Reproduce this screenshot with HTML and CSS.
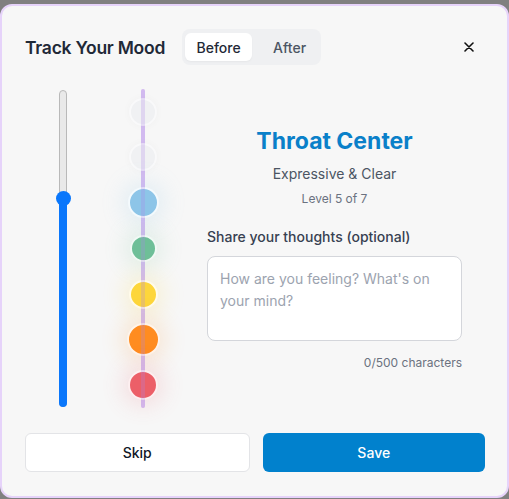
FILE: index.html
```html
<!DOCTYPE html>
<html>
<head>
<meta charset="utf-8">
<link rel="stylesheet" href="styles.css">
</head>
<body>
<div class="modal">
  <div class="header">
    <h1 class="title">Track Your Mood</h1>
    <div class="seg">
      <span class="seg-item active">Before</span>
      <span class="seg-item">After</span>
    </div>
    <button class="close" aria-label="Close">
      <svg width="10" height="10" viewBox="0 0 10 10"><path d="M1 1 L9 9 M9 1 L1 9" stroke="#111" stroke-width="1.6" stroke-linecap="round"/></svg>
    </button>
  </div>
  <div class="main">
    <div class="slider-col">
      <div class="track">
        <div class="fill" style="height:66%"></div>
        <div class="thumb" style="bottom:66%"></div>
      </div>
    </div>
    <div class="chakra-col">
      <div class="line"></div>
      <div class="slot"><span class="dot dot-off"></span></div>
      <div class="slot"><span class="dot dot-off"></span></div>
      <div class="slot"><span class="dot dot-blue"></span></div>
      <div class="slot"><span class="dot dot-green"></span></div>
      <div class="slot"><span class="dot dot-yellow"></span></div>
      <div class="slot"><span class="dot dot-orange"></span></div>
      <div class="slot"><span class="dot dot-red"></span></div>
      <div class="line line-top"></div>
    </div>
    <div class="info">
      <h2 class="center-name">Throat Center</h2>
      <p class="subtitle">Expressive &amp; Clear</p>
      <p class="level">Level 5 of 7</p>
      <label class="label">Share your thoughts (optional)</label>
      <textarea class="notes" placeholder="How are you feeling? What's on your mind?"></textarea>
      <p class="count">0/500 characters</p>
    </div>
  </div>
  <div class="footer">
    <button class="btn btn-skip">Skip</button>
    <button class="btn btn-save">Save</button>
  </div>
</div>
</body>
</html>
```

FILE: styles.css
```css
* { box-sizing: border-box; }
html, body { margin: 0; padding: 0; }
body {
  background: #808080;
  font-family: Inter, "Noto Sans", sans-serif;
  height: 499px;
  overflow: hidden;
}
.modal {
  margin-top: 4px;
  height: 494px;
  background: #f7f7f7;
  border: 2px solid #e6d3fa;
  border-radius: 12px;
  padding: 23px 22px 0 23px;
  display: flex;
  flex-direction: column;
}
.header {
  display: flex;
  align-items: center;
  height: 36px;
}
.title {
  margin: 0;
  font-size: 17.5px;
  font-weight: 600;
  color: #1f2937;
  letter-spacing: -0.25px;
}
.seg {
  margin-left: 17px;
  display: flex;
  background: #eff0f2;
  border-radius: 8px;
  padding: 4px 4px 4px 3px;
  height: 36px;
}
.seg-item {
  width: 65px;
  padding-left: 10px;
  display: flex;
  align-items: center;
  justify-content: center;
  font-size: 14px;
  font-weight: 500;
  color: #4b5563;
  border-radius: 6px;
}
.seg-item.active {
  width: 67px;
  padding-left: 0;
  background: #fff;
  color: #1f2937;
  box-shadow: 0 1px 2px rgba(0,0,0,0.04);
}
.close {
  margin-left: auto;
  margin-right: 11px;
  background: none;
  border: 0;
  padding: 0;
  width: 10px;
  height: 10px;
  display: flex;
}
.main {
  margin-top: 24px;
  height: 319px;
  display: flex;
}
.slider-col {
  width: 76px;
  display: flex;
  justify-content: center;
  padding-top: 1px;
}
.track {
  position: relative;
  width: 8px;
  height: 317px;
  background: #e9e9e9;
  border: 1px solid #b9b9b9;
  border-radius: 4px;
}
.fill {
  position: absolute;
  left: -1px;
  right: -1px;
  bottom: -1px;
  background: #0a77fb;
  border-radius: 0 0 4px 4px;
}
.thumb {
  position: absolute;
  left: 50%;
  width: 15px;
  height: 15px;
  margin-left: -7.5px;
  margin-bottom: -8px;
  background: #0a77fb;
  border-radius: 50%;
}
.chakra-col {
  position: relative;
  width: 84px;
  display: flex;
  flex-direction: column;
}
.line {
  position: absolute;
  left: 40px;
  top: 0;
  bottom: 0;
  width: 4px;
  background: #dfcdf3;
  border-radius: 2px;
}
.line-top {
  background: rgba(170, 130, 230, 0.25);
  z-index: 2;
}
.slot {
  flex: 1;
  display: flex;
  align-items: center;
  justify-content: center;
  position: relative;
  z-index: 1;
}
.dot {
  display: block;
  width: 28px;
  height: 28px;
  border-radius: 50%;
  border: 2px solid rgba(255,255,255,0.9);
}
.dot-off {
  background: #f0f1f3;
  border-color: rgba(255,255,255,0.6);
  box-shadow: 0 0 8px rgba(0,0,0,0.03);
}
.dot-blue {
  width: 31px; height: 31px;
  background: #8dc5e8;
  box-shadow: 0 0 22px 6px rgba(141,197,232,0.18);
}
.dot-green {
  width: 27px; height: 27px;
  background: #6ebf98;
  box-shadow: 0 0 22px 6px rgba(110,191,152,0.16);
}
.dot-yellow {
  width: 29px; height: 29px;
  background: #fdd63b;
  box-shadow: 0 0 22px 6px rgba(253,214,59,0.18);
}
.dot-orange {
  width: 33px; height: 33px;
  background: #ff8c20;
  box-shadow: 0 0 22px 6px rgba(255,140,32,0.16);
}
.dot-red {
  width: 30px; height: 30px;
  background: #ec5f68;
  box-shadow: 0 0 22px 6px rgba(236,95,104,0.16);
}
.info {
  margin-left: 22px;
  width: 255px;
  display: flex;
  flex-direction: column;
  justify-content: center;
}
.center-name {
  margin: 0;
  text-align: center;
  font-size: 23px;
  line-height: 28px;
  font-weight: 700;
  color: #0a80c9;
}
.subtitle {
  margin: 9px 0 0;
  text-align: center;
  font-size: 14px;
  line-height: 20px;
  color: #4b5563;
}
.level {
  margin: 7px 0 0;
  text-align: center;
  font-size: 12px;
  line-height: 16px;
  color: #6b7280;
}
.label {
  margin-top: 20px;
  font-size: 14px;
  line-height: 20px;
  font-weight: 500;
  color: #374151;
}
.notes {
  margin-top: 9px;
  height: 85px;
  width: 100%;
  resize: none;
  border: 1px solid #d4d6db;
  border-radius: 8px;
  background: #fff;
  padding: 11px 12px;
  font-family: Inter, "Noto Sans", sans-serif;
  font-size: 14px;
  line-height: 22px;
  color: #111827;
}
.notes::placeholder { color: #9ca3af; }
.count {
  margin: 14px 0 0;
  text-align: right;
  font-size: 12px;
  line-height: 16px;
  color: #6b7280;
}
.footer {
  margin-top: 25px;
  display: flex;
  gap: 13px;
}
.btn {
  flex: 1;
  height: 39px;
  border-radius: 6px;
  font-family: Inter, "Noto Sans", sans-serif;
  font-size: 14px;
  font-weight: 500;
}
.btn-skip {
  background: #fff;
  border: 1px solid #e3e4e7;
  color: #111827;
}
.btn-save {
  background: #0181cd;
  border: 0;
  color: #fff;
}
```
